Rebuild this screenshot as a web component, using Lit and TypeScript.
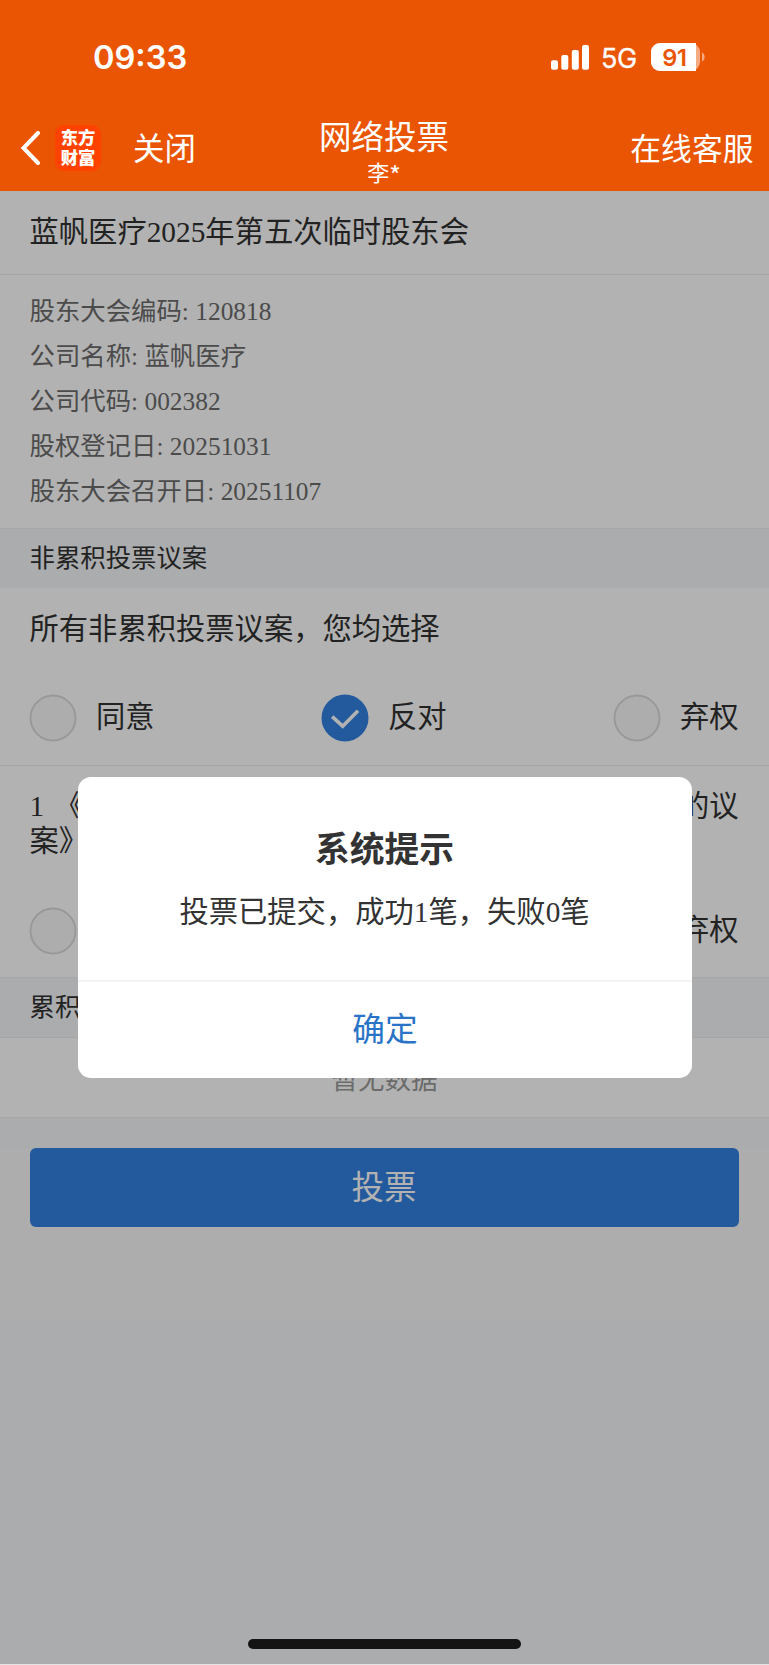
import { LitElement, html, css, svg } from "lit";
import { customElement, property } from "lit/decorators.js";

@customElement("status-bar")
class StatusBar extends LitElement {
  static styles = css`
    :host { display: flex; height: 111px; padding: 0 64px 0 93px; color: #fff; font-family: Inter, sans-serif; justify-content: space-between; box-sizing: border-box; }
    .time { font-size: 32.6px; font-weight: 600; line-height: 40px; margin-top: 37px; }
    .right { display: flex; align-items: center; height: 40px; margin-top: 37px; }
    .bars { width: 39px; height: 25px; display: block; }
    .net { font-size: 27px; font-weight: 400; line-height: 40px; margin: 3px 12px 0 12px; width: 37px; letter-spacing: -.5px; white-space: nowrap; text-indent: -1px; -webkit-text-stroke: .3px #fff; }
    .bat { width: 54px; height: 28px; display: block; }
    .pct { font: 600 23.5px Inter, sans-serif; fill: #ea5504; letter-spacing: -.3px; }
  `;
  render() {
    return html`
      <div class="time">09:33</div>
      <div class="right">
        <svg class="bars" viewBox="0 0 39 25" fill="#fff">
          <rect x="0" y="15.3" width="7" height="9.4" rx="2" /><rect x="10.3" y="10" width="7" height="14.7" rx="2" />
          <rect x="20.8" y="5" width="7" height="19.7" rx="2" /><rect x="31" y="0" width="7" height="24.7" rx="2" />
        </svg>
        <div class="net">5G</div>
        <svg class="bat" viewBox="0 0 54 28">
          <rect x="0" y="0" width="49" height="28" rx="9" fill="#fff" fill-opacity=".5" />
          <path d="M9 0H45V28H9A9 9 0 0 1 0 19V9A9 9 0 0 1 9 0Z" fill="#fff" />
          <path d="M51 9.5C54.5 11 54.5 17 51 18.5Z" fill="#fff" fill-opacity=".5" />
          <text class="pct" x="23.5" y="22.5" text-anchor="middle">91</text>
        </svg>
      </div>`;
  }
}

@customElement("nav-bar")
class NavBar extends LitElement {
  static styles = css`
    :host { display: grid; grid-template-columns: 1fr auto 1fr; height: 80px; color: #fff; }
    .left { display: flex; align-items: center; height: 74px; }
    .back { width: 20px; height: 34px; margin-left: 19.5px; display: block; }
    .logo { width: 46px; height: 46px; border-radius: 9px; background: #ff4200; margin-left: 15.5px; display: grid; place-content: center; font-size: 17.3px; line-height: 19.3px; font-weight: 900; text-align: center; padding-bottom: 3px; box-sizing: border-box; }
    .close { font-size: 31.4px; margin: -2px 0 0 32px; line-height: 40px; }
    .mid { text-align: center; }
    .title { font-size: 32.5px; line-height: 38px; margin: 5px 1px 0 0; }
    .user { font-size: 22px; line-height: 28px; margin: 3px 1px 0 0; }
    .star { font-size: 25px; line-height: 20px; vertical-align: -4px; }
    .service { justify-self: end; font-size: 30.8px; line-height: 40px; margin: 16px 15.5px 0 0; }
  `;
  render() {
    return html`
      <div class="left">
        <svg class="back" viewBox="0 0 20 34"><path d="M18 2L3.5 17L18 32" fill="none" stroke="#fff" stroke-width="4" stroke-linecap="round" stroke-linejoin="miter" /></svg>
        <div class="logo"><span>东方</span><span>财富</span></div>
        <div class="close">关闭</div>
      </div>
      <div class="mid"><div class="title">网络投票</div><div class="user">李<span class="star">*</span></div></div>
      <div class="service">在线客服</div>`;
  }
}

@customElement("vote-options")
class VoteOptions extends LitElement {
  @property() selected = "";
  static styles = css`
    :host { display: flex; justify-content: space-between; padding: 0 30.5px 0 29px; height: 48px; align-items: center; }
    .opt { display: flex; align-items: center; gap: 19px; font-size: 29.3px; line-height: 44px; }
    .dot { width: 48px; height: 48px; display: block; }
    .label { margin-top: -3px; }
  `;
  render() {
    return html`${["同意", "反对", "弃权"].map((o) => html`
      <div class="opt">
        <svg class="dot" viewBox="0 0 48 48">${o === this.selected
          ? svg`<circle cx="24" cy="24" r="23.5" fill="#235a9d" /><path d="M11.2 22.7L21.7 32.2L37 16.7" fill="none" stroke="#b2b2b2" stroke-width="3.6" />`
          : svg`<circle cx="24" cy="24" r="22.5" fill="#adadad" stroke="#989898" stroke-width="1.9" />`}</svg>
        <span class="label">${o}</span>
      </div>`)}`;
  }
}

@customElement("app-root")
class AppRoot extends LitElement {
  static styles = css`
    :host { display: block; position: relative; width: 769px; height: 1665px; box-sizing: border-box; border-bottom: 1px solid #e4e4e4; overflow: hidden; background: #abacae; color: #222; font-family: "Liberation Serif", "Noto Sans CJK SC", sans-serif; }
    .top { background: #ea5504; height: 191px; font-family: "Noto Sans CJK SC", sans-serif; }
    .sheet { background: #b2b2b2; }
    .heading { height: 84px; box-sizing: border-box; border-bottom: 1px solid #a5a5a5; padding: 19px 29.5px 0; font-size: 29.3px; line-height: 44px; }
    .info { height: 253px; box-sizing: border-box; padding: 14px 29.5px 0; font-size: 25.4px; line-height: 45px; color: #4b4b4b; }
    .section { height: 60px; box-sizing: border-box; background: #abacae; border-top: 1px solid #a5a6a7; padding: 7px 29.5px 0; font-size: 25.4px; line-height: 44px; }
    .all { height: 178px; box-sizing: border-box; padding-top: 19px; border-bottom: 1px solid #a5a5a5; }
    .question { padding: 0 30.5px 0 29.5px; font-size: 29.3px; line-height: 44px; margin-bottom: 43px; }
    .item { height: 211px; box-sizing: border-box; padding-top: 23px; }
    .item .question { line-height: 35px; margin-bottom: 48px; }
    .line { display: flex; justify-content: space-between; white-space: pre; }
    .lead { word-spacing: 3px; }
    .empty { height: 81px; box-sizing: border-box; border-top: 1px solid #a5a5a5; border-bottom: 1px solid #a5a6a7; text-align: center; font-size: 26.5px; line-height: 44px; padding-top: 20px; color: #6b6b6b; }
    .actions { background: #adadad; margin-top: 30px; height: 173px; padding: 0 30.5px 0 29.5px; }
    .submit { height: 79px; border-radius: 6px; background: #235a9d; color: #b2b2b2; text-align: center; font-size: 32.5px; line-height: 80px; }
    .modal { position: absolute; left: 78px; top: 777px; width: 614px; height: 301px; border-radius: 13px; background: #fff; color: #333; text-align: center; }
    .mtitle { font-size: 34.8px; font-weight: 700; line-height: 50px; margin-right: 1px; padding-top: 49px; }
    .msg { font-size: 29.3px; line-height: 44px; padding-top: 14px; height: 47px; margin: 0 1px 43px 0; }
    .ok { border-top: 2px solid #f3f3f3; font-size: 32.7px; line-height: 97px; color: #2a74c8; }
    .home { position: absolute; left: 248px; top: 1639px; width: 273px; height: 10px; border-radius: 5px; background: #141414; }
  `;
  render() {
    return html`
      <div class="top"><status-bar></status-bar><nav-bar></nav-bar></div>
      <div class="sheet">
        <div class="heading">蓝帆医疗2025年第五次临时股东会</div>
        <div class="info">
          <div>股东大会编码: 120818</div>
          <div>公司名称: 蓝帆医疗</div>
          <div>公司代码: 002382</div>
          <div>股权登记日: 20251031</div>
          <div>股东大会召开日: 20251107</div>
        </div>
        <div class="section">非累积投票议案</div>
        <div class="all">
          <div class="question">所有非累积投票议案，您均选择</div>
          <vote-options selected="反对"></vote-options>
        </div>
        <div class="item">
          <div class="question"><div class="line"><span class="lead">1 《</span><span>的议</span></div><div class="line">案》</div></div>
          <vote-options></vote-options>
        </div>
        <div class="section">累积投票议案</div>
        <div class="empty">暂无数据</div>
      </div>
      <div class="actions"><div class="submit">投票</div></div>
      <div class="modal">
        <div class="mtitle">系统提示</div>
        <div class="msg">投票已提交，成功1笔，失败0笔</div>
        <div class="ok">确定</div>
      </div>
      <div class="home"></div>`;
  }
}
